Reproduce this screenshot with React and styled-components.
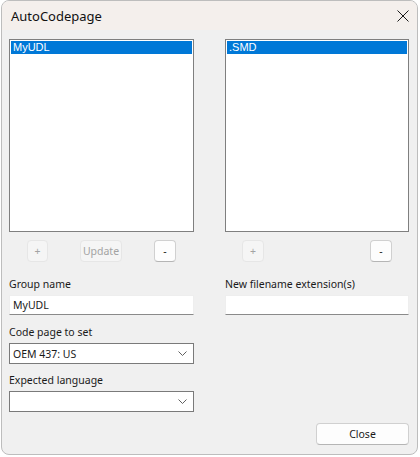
import React from "react"
import styled, { createGlobalStyle } from "styled-components"

const GlobalStyle = createGlobalStyle`
  html, body {
    margin: 0;
    padding: 0;
    background: #ffffff;
  }
  body {
    font-family: "Noto Sans", "Liberation Sans", sans-serif;
  }
`

const Window = styled.div`
  margin-left: 1px;
  width: 417px;
  height: 455px;
  box-sizing: border-box;
  border: 1px solid #bdbdbd;
  border-radius: 8px;
  overflow: hidden;
  background: #f0f0f0;
  display: flex;
  flex-direction: column;
  font-size: 10.5px;
  color: #1a1a1a;
`

const TitleBar = styled.div`
  height: 29px;
  flex: none;
  display: flex;
  align-items: center;
  justify-content: space-between;
  padding: 0 1px 0 9px;
  background: #f4efec;
`

const Title = styled.span`
  font-size: 13px;
  color: #111;
  margin-top: 1px;
`

const CloseX = styled.div`
  width: 26px;
  height: 22px;
  display: flex;
  align-items: center;
  justify-content: center;
`

const Body = styled.div`
  flex: 1;
  padding: 9px 8px 0 7px;
  display: flex;
  flex-direction: column;
`

const Columns = styled.div`
  display: grid;
  grid-template-columns: 185px 184px;
  column-gap: 31px;
`

const Column = styled.div`
  display: flex;
  flex-direction: column;
`

const ListBox = styled.div`
  height: 193px;
  box-sizing: border-box;
  border: 1px solid #7f7f7f;
  background: #ffffff;
  padding: 1px;
`

const ListItem = styled.div`
  height: 13px;
  line-height: 13px;
  padding-left: 2px;
  font-family: "Liberation Sans", Arial, sans-serif;
  font-size: 11px;
  color: ${(p) => (p.selected ? "#ffffff" : "#000")};
  background: ${(p) => (p.selected ? "#0078d7" : "transparent")};
`

const ButtonRow = styled.div`
  display: flex;
  justify-content: space-between;
  padding: 0 ${(p) => p.pad}px;
  margin-top: 8px;
`

const Button = styled.button`
  height: 22px;
  min-width: ${(p) => p.w || 22}px;
  box-sizing: border-box;
  padding: 0;
  font-family: "Noto Sans", "Liberation Sans", sans-serif;
  font-size: 10.5px;
  border-radius: 4px;
  border: 1px solid ${(p) => (p.disabled ? "#e6e6e6" : "#d0d0d0")};
  border-bottom-color: ${(p) => (p.disabled ? "#e6e6e6" : "#b5b5b5")};
  background: ${(p) => (p.disabled ? "#f5f5f5" : "#fdfdfd")};
  color: ${(p) => (p.disabled ? "#a3a3a3" : "#1a1a1a")};
  display: flex;
  align-items: center;
  justify-content: center;
`

const Label = styled.div`
  height: 16px;
  line-height: 16px;
  margin-top: ${(p) => p.top}px;
  margin-bottom: 3px;
`

const TextInput = styled.div`
  height: 20px;
  box-sizing: border-box;
  background: #ffffff;
  border: 1px solid #eeeeee;
  border-bottom: 1px solid #8a8a8a;
  display: flex;
  align-items: center;
  padding-left: 3px;
`

const Select = styled.div`
  height: 21px;
  box-sizing: border-box;
  background: #ffffff;
  border: 1px solid #7a7a7a;
  display: flex;
  align-items: center;
  justify-content: space-between;
  padding: 0 6px 0 3px;
`

const Footer = styled.div`
  display: flex;
  justify-content: flex-end;
  margin-top: 11px;
`

const Chevron = () => (
  <svg width="9" height="5" viewBox="0 0 9 5">
    <path d="M0.5 0.5 L4.5 4.5 L8.5 0.5" fill="none" stroke="#606060" strokeWidth="1" />
  </svg>
)

export default function App() {
  return (
    <>
      <GlobalStyle />
      <Window>
        <TitleBar>
          <Title>AutoCodepage</Title>
          <CloseX>
            <svg width="12" height="12" viewBox="0 0 12 12">
              <path d="M0.5 0.5 L11.5 11.5 M11.5 0.5 L0.5 11.5" stroke="#1a1a1a" strokeWidth="1" />
            </svg>
          </CloseX>
        </TitleBar>
        <Body>
          <Columns>
            <Column>
              <ListBox>
                <ListItem selected>MyUDL</ListItem>
              </ListBox>
              <ButtonRow pad={18}>
                <Button disabled w={21}>+</Button>
                <Button disabled w={42}>Update</Button>
                <Button>-</Button>
              </ButtonRow>
              <Label top={14}>Group name</Label>
              <TextInput>MyUDL</TextInput>
              <Label top={9}>Code page to set</Label>
              <Select>
                <span>OEM 437: US</span>
                <Chevron />
              </Select>
              <Label top={8}>Expected language</Label>
              <Select>
                <span></span>
                <Chevron />
              </Select>
            </Column>
            <Column>
              <ListBox>
                <ListItem selected>.SMD</ListItem>
              </ListBox>
              <ButtonRow pad={17}>
                <Button disabled>+</Button>
                <Button>-</Button>
              </ButtonRow>
              <Label top={14}>New filename extension(s)</Label>
              <TextInput />
            </Column>
          </Columns>
          <Footer>
            <Button w={93}>Close</Button>
          </Footer>
        </Body>
      </Window>
    </>
  )
}
